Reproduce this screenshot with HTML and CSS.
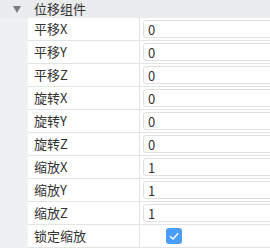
FILE: index.html
```html
<!DOCTYPE html>
<html lang="zh">
<head>
    <meta charset="UTF-8">
    <title>位移组件</title>
    <link rel="stylesheet" href="styles.css">
</head>
<body>
<div class="panel">
    <div class="panel-header">
        <span class="arrow"></span>
        <span class="title">位移组件</span>
    </div>
    <div class="panel-body">
        <div class="row"><div class="label">平移X</div><div class="value"><input type="text" value="0"/></div></div>
        <div class="row"><div class="label">平移Y</div><div class="value"><input type="text" value="0"/></div></div>
        <div class="row"><div class="label">平移Z</div><div class="value"><input type="text" value="0"/></div></div>
        <div class="row"><div class="label">旋转X</div><div class="value"><input type="text" value="0"/></div></div>
        <div class="row"><div class="label">旋转Y</div><div class="value"><input type="text" value="0"/></div></div>
        <div class="row"><div class="label">旋转Z</div><div class="value"><input type="text" value="0"/></div></div>
        <div class="row"><div class="label">缩放X</div><div class="value"><input type="text" value="1"/></div></div>
        <div class="row"><div class="label">缩放Y</div><div class="value"><input type="text" value="1"/></div></div>
        <div class="row"><div class="label">缩放Z</div><div class="value"><input type="text" value="1"/></div></div>
        <div class="row">
            <div class="label">锁定缩放</div>
            <div class="value">
                <span class="checkbox">
                    <svg width="16" height="16" viewBox="0 0 16 16">
                        <path d="M4 8.3 L7 11 L12.2 5.2" fill="none" stroke="#fff" stroke-width="1.3"/>
                    </svg>
                </span>
            </div>
        </div>
    </div>
</div>
</body>
</html>
```

FILE: styles.css
```css
body {
    margin: 0;
    overflow: hidden;
    background: #fff;
    font-family: "Noto Sans CJK SC", "Microsoft YaHei", sans-serif;
    font-size: 13px;
    color: #333;
}

.panel {
    width: 100%;
}

.panel-header {
    display: flex;
    align-items: center;
    height: 18px;
    background: #eaeced;
}

.arrow {
    width: 0;
    height: 0;
    margin-left: 13px;
    border-left: 4px solid transparent;
    border-right: 4px solid transparent;
    border-top: 7px solid #7a7c7e;
}

.title {
    margin-left: 13px;
    line-height: 18px;
}

.panel-body {
    padding-left: 28px;
    background: #eef0f1;
}

.row {
    display: flex;
    height: 22px;
    background: #fff;
    border-bottom: 1px solid #e3e4e5;
}

.label {
    width: 105px;
    padding-left: 6px;
    line-height: 22px;
    border-right: 1px solid #e3e4e5;
}

/* the input runs past the panel edge, so its right side is cut off */
.value {
    flex: 1;
    display: flex;
    align-items: center;
    padding-left: 3px;
    overflow: hidden;
}

.value input {
    flex: none;
    width: calc(100% + 10px);
    height: 18px;
    box-sizing: border-box;
    padding: 0 4px;
    border: 1px solid #e0e0e0;
    border-radius: 3px;
    font-family: inherit;
    font-size: 13px;
    color: #333;
    outline: none;
}

.checkbox {
    display: flex;
    width: 16px;
    height: 16px;
    margin-left: 23px;
    border-radius: 3px;
    background: #4a9df8;
}
```
